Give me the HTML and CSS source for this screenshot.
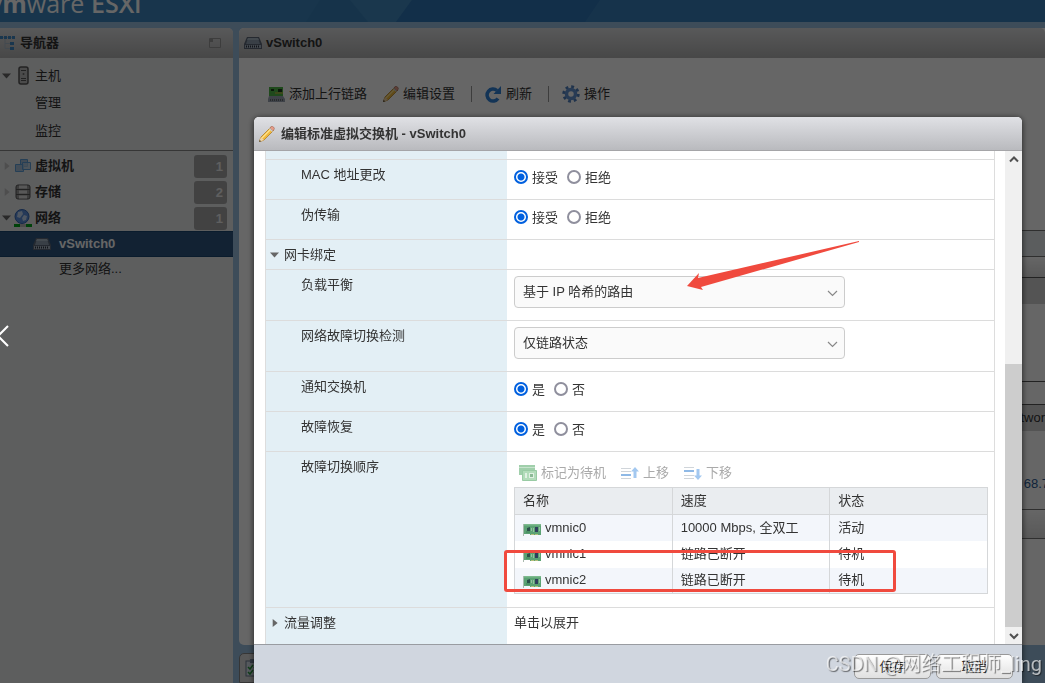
FILE: index.html
```html
<!DOCTYPE html>
<html lang="zh-CN">
<head>
    <meta charset="UTF-8">
    <meta name="viewport" content="width=device-width, initial-scale=1.0">
    <title>编辑标准虚拟交换机 - vSwitch0</title>
    <link rel="stylesheet" href="styles.css">
</head>
<body>

  <!-- shared icons -->
  <svg class="defs" width="0" height="0">
    <symbol id="i-switch" viewBox="0 0 18 12">
      <path d="M3 0h12l3 7v5H0V7z" fill="#5c6878"/>
      <path d="M4 1h10l2 6H2z" fill="#8e9eae"/>
      <path d="M4 1h10l1 2H3z" fill="#abb9c6"/>
      <path d="M1 8h16v3H1z" fill="#a9b5c4"/>
      <path d="M2 9.500h14" stroke="#2b3440" stroke-width="2" stroke-dasharray="1 1"/>
    </symbol>
    <symbol id="i-pencil" viewBox="0 0 16 16">
      <path d="M0 16l2-5L12 1l3 3L5 14z" fill="#f0b93b" stroke="#a8741c" stroke-width="0.7"/>
      <path d="M3 12L12 3" stroke="#ffe28d" stroke-width="1.3"/>
      <path d="M11 2l1-1.500q1-1 2.500.5t.5 2.500L14 5z" fill="#e59a87" stroke="#9c6d60" stroke-width="0.6"/>
      <path d="M10.500 2.500l3 3" stroke="#c9ccd0" stroke-width="1.300"/>
      <path d="M0 16l2-5 3 3z" fill="#efd3a5"/>
      <path d="M0 16l.8-2 1.200 1.200z" fill="#333"/>
    </symbol>
    <symbol id="i-nic" viewBox="0 0 18 12">
      <path d="M1 0h17v11H7v-1H1z" fill="#5ba273"/>
      <path d="M1 0h17v1.500H1z" fill="#7dba8e"/>
      <path d="M.5 0v12" stroke="#a9b8ae"/>
      <path d="M4 4l3-1v4H4z" fill="#2b4f4a"/>
      <path d="M12 3h3v5h-3z" fill="#2f3f5c"/>
      <path d="M8 4h1v3H8zM10 4h1v4h-1zM16 3h1v4h-1z" fill="#93bf9f"/>
      <path d="M3 8h4" stroke="#3f7f58"/>
      <path d="M8 10.500h8" stroke="#b5c07b" stroke-dasharray="3 1"/>
    </symbol>
  </svg>

  <header class="banner">
    <svg class="banner-bg" viewBox="0 0 1045 22" preserveAspectRatio="xMinYMin slice">
      <path d="M0 0h412l-16 22H0z" fill="#3c85bd"/>
      <path d="M320 0h30l18 22h-62z" fill="#3881b8"/>
      <path d="M350 0h62l-16 22h-28z" fill="#4189c0"/>
      <path d="M412 0h188l-15 22H396z" fill="#2e75b6"/>
    </svg>
    <span class="logo"><b>vm</b>ware</span><span class="logo esxi">ESXi</span>
  </header>

  <div class="layout">
    <nav class="navigator">
      <div class="panel-title nav-title">
        <svg width="16" height="16" viewBox="0 0 16 16"><path d="M0 2.500h15M5 3v10.500h8M5 8.500h8" fill="none" stroke="#a9b8c8"/><path d="M0 1h3v3H0zM4 1h3v3H4zM8 1h3v3H8zM12 1h3v3h-3zM10 7h4v3h-4zM10 12h4v3h-4z" fill="#3f87c4"/></svg>
        <span>导航器</span>
        <svg class="collapse" width="12" height="10" viewBox="0 0 12 10"><path d="M.5.5h11v9H.5z" fill="none" stroke="#9a9a9a"/><path d="M1 1h3v3H1z" fill="#9a9a9a"/></svg>
      </div>
      <ul class="tree">
        <li class="host"><i class="arrow open"></i>
          <svg width="16" height="20" viewBox="0 0 16 20"><rect x="4" y="1" width="9" height="17" rx="2" fill="#bbb" stroke="#555" stroke-width="1.500"/><path d="M6 4.500h5M6 12.500h5M6 14.500h5" stroke="#555"/><circle cx="8.500" cy="8" r="1" fill="#666"/></svg>
          <span>主机</span></li>
        <li class="sub">管理</li>
        <li class="sub last">监控</li>
      </ul>
      <ul class="tree inventory">
        <li><i class="arrow"></i>
          <svg width="16" height="16" viewBox="0 0 16 16"><path d="M5.500 1.500h7v7h-7z" fill="#a2bcd5" stroke="#5d9ed6"/><path d="M.5 6.500h8v7h-8z" fill="#a7c1da" stroke="#5d9ed6"/><path d="M7.500 4.500h8v7h-8z" fill="#b3cadf" fill-opacity=".7" stroke="#5d9ed6"/></svg>
          <span>虚拟机</span><em>1</em></li>
        <li><i class="arrow"></i>
          <svg width="16" height="16" viewBox="0 0 16 16"><rect x="1" y="1" width="14" height="14" rx="2" fill="#999" stroke="#555"/><path d="M1 5.500h14M1 10.500h14" stroke="#555"/><path d="M4 3h8M4 8h8M4 13h8" stroke="#ddd" stroke-width="3"/></svg>
          <span>存储</span><em>2</em></li>
        <li><i class="arrow open"></i>
          <svg width="18" height="18" viewBox="0 0 18 18"><circle cx="8" cy="7.500" r="7" fill="#5c90dc" stroke="#3567b5"/><path d="M4 3l4-1 1 3-3 4-3-1zM10 6l3 1-1 4-3 1-1-3z" fill="#c5daf6"/><path d="M0 15h6v3H0zM12 15h6v3h-6z" fill="#00a51b"/><path d="M6 15h6v3H6z" fill="#bbb"/></svg>
          <span>网络</span><em>1</em></li>
        <li class="selected"><svg width="18" height="12"><use href="#i-switch"/></svg><span>vSwitch0</span></li>
        <li class="more"><a href="#">更多网络...</a></li>
      </ul>
    </nav>

    <div class="content">
      <main class="panel">
        <div class="panel-title">
          <svg width="18" height="12"><use href="#i-switch"/></svg>
          <span>vSwitch0</span>
        </div>
        <div class="toolbar">
          <button><svg width="17" height="17" viewBox="0 0 17 17"><path d="M1 1h14v9H1z" fill="#4fb648"/><path d="M3 3h3v2H3zM10 3h4v3h-4z" fill="#1c3d1c"/><path d="M7 7h8" stroke="#d8b53a"/><path d="M1 10h14l2 3v3H0v-3z" fill="#9ba6b3"/><path d="M2 14h13" stroke="#333" stroke-dasharray="1 1"/></svg>添加上行链路</button>
          <button><svg width="16" height="16"><use href="#i-pencil"/></svg>编辑设置</button>
          <hr>
          <button><svg width="17" height="17" viewBox="0 0 17 17"><path d="M13 12.500A6 6 0 1 1 12 4.500" fill="none" stroke="#3182d8" stroke-width="3.500"/><path d="M16 0v8H8.500z" fill="#3182d8"/></svg>刷新</button>
          <hr>
          <button><svg width="18" height="18" viewBox="0 0 18 18"><circle cx="9" cy="9" r="7.200" fill="none" stroke="#5080be" stroke-width="3" stroke-dasharray="2.800 2.850"/><circle cx="9" cy="9" r="4.500" fill="none" stroke="#6595d3" stroke-width="3.500"/></svg>操作</button>
        </div>
        <div class="details">
          <div class="strip blue"></div>
          <div class="strip fade"></div>
          <div class="card"><h4></h4></div>
          <div class="card second"><h4>twor</h4><p>68.7</p></div>
          <div class="strip end"></div>
        </div>
      </main>
      <section class="tasks">
        <svg width="16" height="18" viewBox="0 0 16 18"><rect x="1" y="2" width="14" height="15" fill="#d9e3ee" stroke="#6c7c90"/><path d="M5 0h6v4H5z" fill="#7c8ea6"/><path d="M3 8l2 2 3-4M3 13l2 2 3-4M9 8l2 2 3-4M9 13l2 2 3-4" fill="none" stroke="#2a9a3f" stroke-width="1.500"/></svg>
      </section>
    </div>
  </div>

  <div class="backdrop"></div>

  <div class="dialog" role="dialog" aria-labelledby="dialog-title">
    <div class="dialog-title">
      <svg width="16" height="16"><use href="#i-pencil"/></svg>
      <h1 id="dialog-title">编辑标准虚拟交换机 - vSwitch0</h1>
    </div>

    <div class="dialog-body">
      <div class="settings">
        <div class="row stub"><div class="name"></div><div class="value"></div></div>
        <div class="row">
          <div class="name">MAC 地址更改</div>
          <div class="value radios">
            <label><input type="radio" name="mac" checked>接受</label>
            <label><input type="radio" name="mac">拒绝</label>
          </div>
        </div>
        <div class="row">
          <div class="name">伪传输</div>
          <div class="value radios">
            <label><input type="radio" name="forged" checked>接受</label>
            <label><input type="radio" name="forged">拒绝</label>
          </div>
        </div>
        <div class="row group">
          <div class="name"><i class="arrow open"></i>网卡绑定</div>
          <div class="value"></div>
        </div>
        <div class="row tall">
          <label class="name" for="balance">负载平衡</label>
          <div class="value">
            <div class="select">
              <select id="balance"><option>基于 IP 哈希的路由</option></select>
              <svg width="11" height="7" viewBox="0 0 11 7"><path d="M1 1l4.500 4.500L10 1" fill="none" stroke="#888" stroke-width="1.200"/></svg>
            </div>
          </div>
        </div>
        <div class="row tall">
          <label class="name" for="detect">网络故障切换检测</label>
          <div class="value">
            <div class="select">
              <select id="detect"><option>仅链路状态</option></select>
              <svg width="11" height="7" viewBox="0 0 11 7"><path d="M1 1l4.500 4.500L10 1" fill="none" stroke="#888" stroke-width="1.200"/></svg>
            </div>
          </div>
        </div>
        <div class="row">
          <div class="name">通知交换机</div>
          <div class="value radios">
            <label><input type="radio" name="notify" checked>是</label>
            <label><input type="radio" name="notify">否</label>
          </div>
        </div>
        <div class="row">
          <div class="name">故障恢复</div>
          <div class="value radios">
            <label><input type="radio" name="failback" checked>是</label>
            <label><input type="radio" name="failback">否</label>
          </div>
        </div>
        <div class="row order">
          <div class="name">故障切换顺序</div>
          <div class="value">
            <div class="nic-toolbar">
              <button disabled><svg width="18" height="16" viewBox="0 0 18 16"><path d="M0 0h16v10H0z" fill="#a0cfab"/><path d="M0 2.500h16" stroke="#c7e3cd"/><path d="M3.500 5.500h14v10h-14z" fill="#b2dcba" stroke="#99cba4"/><path d="M6 8h2v5H6zM10 8h5v5h-5z" fill="#e0f1e3"/><path d="M11 9h3v3h-3z" fill="#8cba96"/></svg>标记为待机</button>
              <button disabled><svg width="18" height="14" viewBox="0 0 18 14"><path d="M0 2.500h10M0 5.500h10M0 12.500h10" stroke="#d0d5da"/><path d="M0 8h10v2H0z" fill="#8fb9e6"/><path d="M14 1l4 4.500h-2.500V12h-3V5.500H10z" fill="#a3c8f0"/></svg>上移</button>
              <button disabled><svg width="18" height="14" viewBox="0 0 18 14"><path d="M0 1.500h10M0 9.500h10M0 12.500h10" stroke="#d0d5da"/><path d="M0 4h10v2H0z" fill="#8fb9e6"/><path d="M14 14l-4-4.500h2.500V3h3v6.500H18z" fill="#a3c8f0"/></svg>下移</button>
            </div>
            <table class="nics">
              <thead>
                <tr><th>名称</th><th>速度</th><th>状态</th></tr>
              </thead>
              <tbody>
                <tr><td><svg width="18" height="12"><use href="#i-nic"/></svg>vmnic0</td><td>10000 Mbps, 全双工</td><td>活动</td></tr>
                <tr><td><svg width="18" height="12"><use href="#i-nic"/></svg>vmnic1</td><td>链路已断开</td><td>待机</td></tr>
                <tr><td><svg width="18" height="12"><use href="#i-nic"/></svg>vmnic2</td><td>链路已断开</td><td>待机</td></tr>
              </tbody>
            </table>
          </div>
        </div>
        <div class="row group final">
          <div class="name"><i class="arrow"></i>流量调整</div>
          <div class="value">单击以展开</div>
        </div>
      </div>

      <div class="scrollbar">
        <svg width="17" height="17" viewBox="0 0 17 17"><path d="M5 10.500L9 6.500l4 4" fill="none" stroke="#505050" stroke-width="2"/></svg>
        <div class="thumb"></div>
        <svg width="17" height="17" viewBox="0 0 17 17"><path d="M5 7l4 4 4-4" fill="none" stroke="#505050" stroke-width="2"/></svg>
      </div>
    </div>

    <div class="dialog-footer">
      <button>保存</button>
      <button>取消</button>
    </div>

    <svg class="mark-arrow" width="173" height="50" viewBox="0 0 173 50"><path d="M172 0L11 37l1-5L0 45l16 4-2-3L172 1z" fill="#f04a3e"/></svg>
    <div class="mark-box"></div>
  </div>

  <button class="prev" aria-label="上一张"><svg width="10" height="24" viewBox="0 0 10 24"><path d="M8 2L-2 12 8 22" fill="none" stroke="#fff" stroke-width="2"/></svg></button>
  <div class="watermark">CSDN @网络工程师_ling</div>

</body>
</html>
```
FILE: styles.css
```css
* {
  box-sizing: border-box;
}

body {
  margin: 0;
  height: 100vh;
  overflow: hidden;
  display: flex;
  flex-direction: column;
  background: #98bede;
  color: #333;
  font: 13px/18px "Liberation Sans", "Noto Sans CJK SC", sans-serif;
}

button, select {
  font: inherit;
  color: inherit;
}

svg {
  flex: none;
}

.defs {
  position: absolute;
}

/* header */
.banner {
  position: relative;
  flex: none;
  height: 22px;
  overflow: hidden;
  background: #3980bc;
}

.banner-bg {
  position: absolute;
  width: 100%;
  height: 100%;
}

.logo {
  position: absolute;
  bottom: 3px;
  left: -12px;
  color: #fff;
  font-family: "Open Sans", sans-serif;
  font-size: 25px;
  line-height: 32px;
  font-weight: 400;
}

.logo b {
  font-weight: 700;
}

.logo.esxi {
  left: 91px;
  font-weight: 600;
}

.layout {
  flex: 1;
  display: flex;
  gap: 6px;
  padding-top: 6px;
  min-height: 0;
}

/* navigator */
.navigator {
  flex: none;
  width: 233px;
  background: #e8eaec;
  border-radius: 0 5px 0 0;
}

.panel-title {
  display: flex;
  align-items: center;
  gap: 4px;
  height: 30px;
  padding-left: 5px;
  background: linear-gradient(#dddee0, #b2b2b2);
  border-radius: 5px 5px 0 0;
  font-weight: bold;
}

.nav-title {
  padding-left: 0;
  border-radius: 0 5px 0 0;
}

.collapse {
  margin-left: auto;
  margin-right: 12px;
}

.tree {
  list-style: none;
  margin: 0;
  padding: 4px 0;
  border-bottom: 1px solid #888;
}

.tree li {
  display: flex;
  align-items: center;
  height: 26px;
  gap: 3px;
  padding: 0 6px 0 2px;
}

.tree li.host {
  height: 28px;
}

.tree li.sub {
  padding-left: 35px;
}

.tree li.sub.last {
  height: 30px;
}

.inventory {
  border: 0;
  padding-top: 2px;
}

.inventory span {
  font-weight: bold;
}

.tree i + svg {
  width: 18px;
}

.tree em {
  margin-left: auto;
  width: 33px;
  height: 23px;
  padding-right: 4px;
  border-radius: 3px;
  background: #a6a6a6;
  color: #eee;
  font-style: normal;
  font-weight: bold;
  line-height: 23px;
  text-align: right;
}

.tree li.selected {
  background: #2d557f;
  border: 1px solid #1b4872;
  border-width: 1px 0;
  color: #fff;
  padding-left: 33px;
  gap: 8px;
}

.tree li.more {
  padding-left: 59px;
  height: 24px;
}

.tree a {
  color: #333;
  text-decoration: none;
}

.arrow {
  flex: none;
  width: 9px;
  height: 8px;
  background: #999;
  clip-path: polygon(30% 0, 85% 50%, 30% 100%);
}

.tree .arrow:not(.open) {
  background: #c4c4c4;
}

.arrow.open {
  background: #666;
  clip-path: polygon(0 20%, 100% 20%, 50% 80%);
}

/* main panel */
.content {
  flex: 1;
  display: flex;
  flex-direction: column;
  gap: 8px;
  min-width: 0;
}

.panel {
  flex: 1;
  display: flex;
  flex-direction: column;
  background: #fff;
  border-radius: 5px 0 0 5px;
}

.toolbar {
  display: flex;
  align-items: center;
  height: 36px;
  margin-top: 18px;
  padding-left: 29px;
}

.toolbar button {
  display: flex;
  align-items: center;
  gap: 4px;
  margin-right: 16px;
  padding: 0;
  border: 0;
  background: none;
}

.toolbar hr {
  width: 1px;
  height: 16px;
  margin: 0 13px 0 0;
  border: 0;
  background: #999;
}

.details {
  margin: 118px 0 0 28px;
}

.strip {
  height: 26px;
  border-top: 1px solid #777;
  background: linear-gradient(#fff, #ddd);
}

.strip.blue {
  background: #e3e9ec;
}

.strip.fade {
  height: 21px;
}

.strip.end {
  height: 30px;
  border-bottom: 1px solid #777;
}

.card {
  height: 105px;
  border: 1px solid #555;
  border-width: 1px 0;
}

.card h4 {
  margin: 0;
  height: 26px;
  background: #d3d3d3;
  font-weight: normal;
  line-height: 26px;
  text-align: right;
}

.card.second {
  margin-top: 22px;
  margin-right: -4px;
  border-bottom: 0;
}

.card.second h4 {
  padding-right: 4px;
}

.card p {
  margin: 44px 0 0;
  color: #2c5b93;
  text-align: right;
}

.tasks {
  height: 30px;
  margin-right: 40px;
  padding: 5px;
  background: #ddd;
  border: 1px solid #888;
  border-radius: 5px 0 0 0;
}

.backdrop {
  position: fixed;
  inset: 0;
  background: rgba(0, 0, 0, 0.6);
}

/* dialog */
.dialog {
  position: fixed;
  top: 117px;
  left: 254px;
  right: 23px;
  bottom: 0;
  display: flex;
  flex-direction: column;
  background: #fff;
  border-radius: 5px 5px 0 0;
  box-shadow: 0 1px 6px rgba(0, 0, 0, 0.7);
}

.dialog-title {
  display: flex;
  align-items: center;
  gap: 6px;
  flex: none;
  height: 34px;
  padding-left: 5px;
  background: linear-gradient(#e0e1e5, #b9babe);
  border-bottom: 1px solid #a5a5a8;
  border-radius: 5px 5px 0 0;
}

.dialog-title h1 {
  margin: 0;
  font-size: 13px;
}

.dialog-body {
  flex: none;
  display: flex;
  gap: 10px;
  padding-left: 11px;
}

.settings {
  flex: 1;
  border: 1px solid #ddd;
  border-width: 0 1px;
}

.row {
  display: flex;
  min-height: 40px;
  border-bottom: 1px solid #dcdcdc;
}

.row.stub {
  min-height: 9px;
}

.row.group {
  min-height: 30px;
}

.row.tall {
  min-height: 51px;
}

.row.order {
  min-height: 156px;
}

.row.final {
  min-height: 36px;
  border-bottom: 0;
}

.row .name {
  flex: none;
  width: 241px;
  padding: 6px 0 0 35px;
  background: #e3eff5;
}

.row.group .name {
  display: flex;
  gap: 5px;
  padding-left: 4px;
}

.name .arrow {
  margin-top: 5px;
  background: #666;
}

.row .value {
  flex: 1;
  padding: 6px 6px 0 7px;
}

.row .radios {
  display: flex;
  gap: 9px;
  padding-top: 9px;
}

.radios label {
  display: flex;
  align-items: flex-start;
  gap: 4px;
}

.radios input {
  appearance: none;
  width: 14px;
  height: 14px;
  margin: 1px 0 0;
  border: 2px solid #8f8f9d;
  border-radius: 50%;
  background: #fff;
}

.radios input:checked {
  border-color: #0060df;
  background: radial-gradient(#0060df 3px, #fff 4px);
}

.select {
  position: relative;
  max-width: 331px;
}

.select select {
  display: block;
  width: 100%;
  height: 32px;
  padding: 0 8px;
  appearance: none;
  background: #fafafa;
  border: 1px solid #ccc;
  border-radius: 4px;
}

.select svg {
  position: absolute;
  top: 14px;
  right: 7px;
}

.nic-toolbar {
  display: flex;
  align-items: center;
  gap: 15px;
  height: 29px;
  padding-left: 5px;
}

.nic-toolbar button {
  display: flex;
  align-items: center;
  gap: 4px;
  padding: 0;
  border: 0;
  background: none;
  color: #aaa;
}

.nics {
  width: 100%;
  border-collapse: collapse;
  table-layout: fixed;
  border: 1px solid #d5d7d9;
}

.nics th, .nics td {
  height: 26px;
  padding: 0 8px;
  border-right: 1px solid #d5d7d9;
  text-align: left;
}

.nics th {
  height: 27px;
  background: #eaedf0;
  border-bottom: 1px solid #d5d7d9;
  font-weight: normal;
}

.nics tbody tr:nth-child(odd) {
  background: #f3f6fb;
}

.nics tbody tr:nth-child(even) td {
  height: 27px;
}

.nics td svg {
  margin-right: 4px;
  vertical-align: -4px;
}

.scrollbar {
  flex: none;
  width: 17px;
  display: flex;
  flex-direction: column;
  background: #f0f0f0;
}

.thumb {
  height: 263px;
  margin-top: auto;
  background: #cdcdcd;
}

.dialog-footer {
  flex: 1;
  display: flex;
  align-items: flex-start;
  justify-content: flex-end;
  gap: 5px;
  padding: 9px 9px 0 0;
  background: #d0d6df;
  border-top: 1px solid #999ca1;
}

.dialog-footer button {
  width: 77px;
  height: 25px;
  padding: 0;
  border: 1px solid #999;
  border-radius: 5px;
  background: linear-gradient(#fff, #e0e0e0);
}

/* annotations over the dialog */
.mark-arrow {
  position: absolute;
  top: 124px;
  left: 433px;
}

.mark-box {
  position: absolute;
  top: 433px;
  left: 250px;
  width: 392px;
  height: 42px;
  border: 3px solid #f04a3e;
  border-radius: 3px;
}

.prev {
  position: fixed;
  top: 324px;
  left: 0;
  padding: 0;
  border: 0;
  background: none;
}

.prev svg {
  display: block;
}

.watermark {
  position: fixed;
  right: 3px;
  bottom: 7px;
  color: rgba(255, 255, 255, 0.65);
  font: 20px/24px Roboto, "Noto Sans CJK SC", sans-serif;
  text-shadow: 1px 1px 1px rgba(0, 0, 0, 0.5);
}
```
